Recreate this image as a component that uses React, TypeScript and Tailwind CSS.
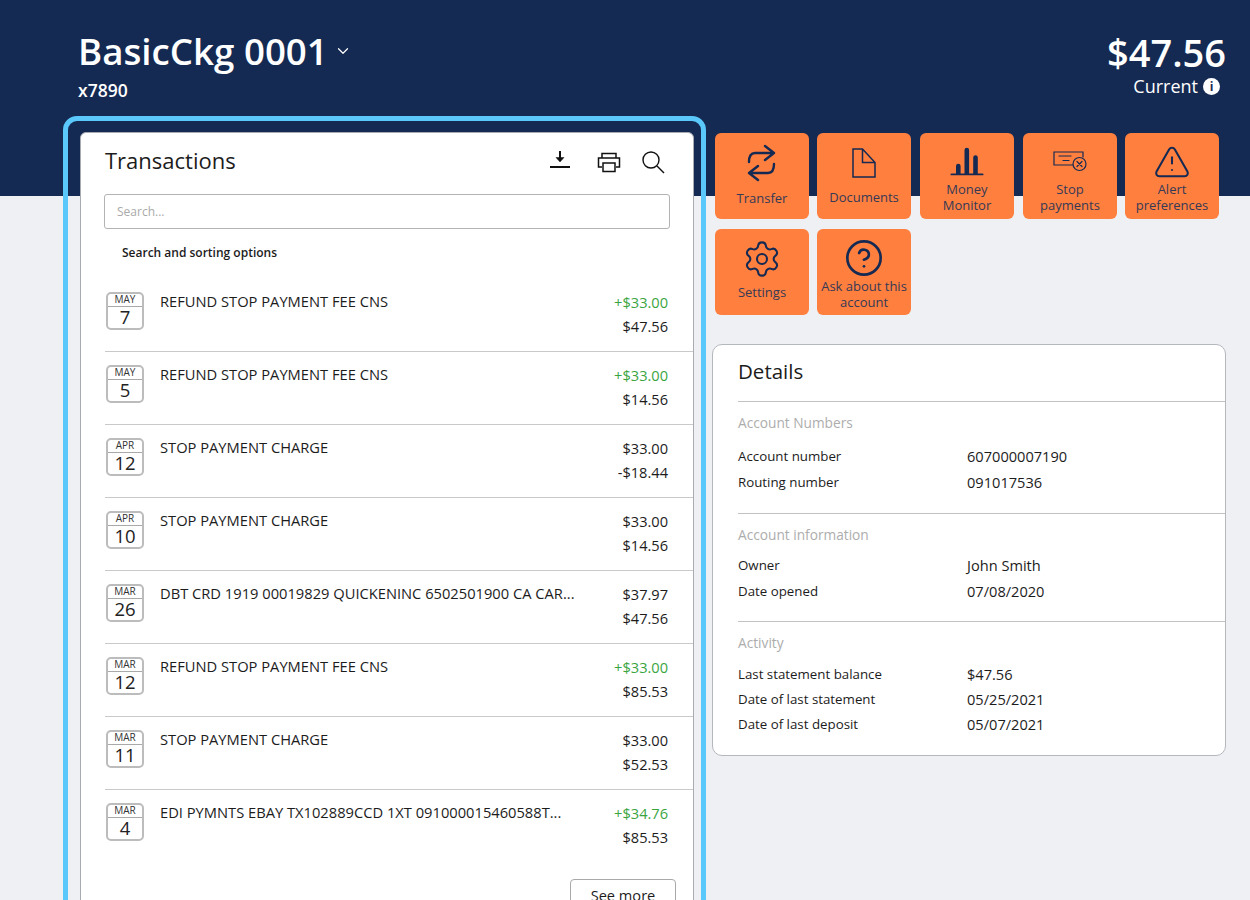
import type { ReactNode } from "react";
import { ChevronDown, CircleHelp, Settings, TriangleAlert } from "lucide-react";

const navy = "#152a52";

const transactions = [
  { month: "MAY", day: "7", name: "REFUND STOP PAYMENT FEE CNS", amount: "+$33.00", balance: "$47.56", credit: true },
  { month: "MAY", day: "5", name: "REFUND STOP PAYMENT FEE CNS", amount: "+$33.00", balance: "$14.56", credit: true },
  { month: "APR", day: "12", name: "STOP PAYMENT CHARGE", amount: "$33.00", balance: "-$18.44", credit: false },
  { month: "APR", day: "10", name: "STOP PAYMENT CHARGE", amount: "$33.00", balance: "$14.56", credit: false },
  { month: "MAR", day: "26", name: "DBT CRD 1919 00019829 QUICKENINC 6502501900 CA CAR...", amount: "$37.97", balance: "$47.56", credit: false },
  { month: "MAR", day: "12", name: "REFUND STOP PAYMENT FEE CNS", amount: "+$33.00", balance: "$85.53", credit: true },
  { month: "MAR", day: "11", name: "STOP PAYMENT CHARGE", amount: "$33.00", balance: "$52.53", credit: false },
  { month: "MAR", day: "4", name: "EDI PYMNTS EBAY TX102889CCD 1XT 091000015460588T...", amount: "+$34.76", balance: "$85.53", credit: true },
];

const sections = [
  {
    title: "Account Numbers",
    gap: "mb-[12px]",
    rowClass: "h-[26px]",
    rows: [
      ["Account number", "607000007190"],
      ["Routing number", "091017536"],
    ],
  },
  {
    title: "Account information",
    gap: "mb-[9px]",
    rowClass: "h-[26px]",
    rows: [
      ["Owner", "John Smith"],
      ["Date opened", "07/08/2020"],
    ],
  },
  {
    title: "Activity",
    gap: "mb-[10px]",
    rowClass: "h-[25px]",
    rows: [
      ["Last statement balance", "$47.56"],
      ["Date of last statement", "05/25/2021"],
      ["Date of last deposit", "05/07/2021"],
    ],
  },
];

const TransferIcon = () => (
  <svg width="30" height="38" viewBox="0 0 30 38" fill="none" stroke={navy} strokeWidth="2.4" strokeLinecap="round" strokeLinejoin="round">
    <path d="M2 18c0-6 2-9 6-9h19M18 2l9 7-9 7" />
    <path d="M27 20c0 6-2 9-6 9H2M11 22l-9 7 9 7" />
  </svg>
);

const DocumentIcon = () => (
  <svg width="24" height="30" viewBox="0 0 24 30" fill="none" stroke={navy} strokeWidth="1.5">
    <path d="M1 1h9.500L23 14.500V29H1zM10.500 1v13.500H23" />
  </svg>
);

const ChartIcon = () => (
  <svg width="34" height="30" viewBox="0 0 34 30" fill={navy}>
    <path d="M6 29V20a2.300 2.300 0 0 1 4.600 0v9zM14.500 29V4a2.300 2.300 0 0 1 4.600 0v25zM23.200 29V11.500a2.300 2.300 0 0 1 4.600 0V29z" />
    <rect x="0.500" y="27.500" width="33" height="1.800" rx="0.900" />
  </svg>
);

const StopIcon = () => (
  <svg width="34" height="22" viewBox="0 0 34 22" fill="none" stroke={navy} strokeWidth="1.200" strokeLinecap="round">
    <path d="M20 15H1V2h29v5" />
    <path d="M6 6h12M10 10.500h6" />
    <circle cx="26.500" cy="14" r="6.500" />
    <path d="M24 11.500l5 5M29 11.500l-5 5" />
  </svg>
);

const actions: { label: ReactNode; icon: ReactNode; labelClass?: string }[] = [
  { label: "Transfer", icon: <TransferIcon /> },
  { label: "Documents", icon: <DocumentIcon />, labelClass: "pb-[2px]" },
  { label: <>Money<br />Monitor</>, icon: <ChartIcon />, labelClass: "pt-[2px]" },
  { label: <>Stop<br />payments</>, icon: <StopIcon />, labelClass: "pt-[2px]" },
  { label: <>Alert<br />preferences</>, icon: <TriangleAlert size={38} strokeWidth={1.3} color={navy} /> },
  { label: "Settings", icon: <Settings size={40} strokeWidth={1.25} color={navy} />, labelClass: "pb-[5px]" },
  { label: <>Ask about this<br />account</>, icon: <CircleHelp size={40} strokeWidth={1.6} color={navy} /> },
];

const CalendarBadge = ({ month, day }: { month: string; day: string }) => (
  <div className="w-[38px] h-[38px] shrink-0 ml-px -mt-px rounded-[5px] border-2 border-[#bcbcbc] flex flex-col text-center overflow-hidden">
    <div className="h-[13px] border-b border-[#a9a9a9] text-[10px] leading-[10px] text-[#333]">{month}</div>
    <div className="flex-1 text-[18.500px] leading-[20px] text-[#222]">{day}</div>
  </div>
);

const App = () => {
  return (
    <div className="h-[900px] overflow-hidden bg-[#eef0f4] text-[#1c1c1c] font-['Open_Sans',sans-serif]">
      <header className="h-[196px] bg-[#152a52] text-white flex justify-between pl-[78px] pr-[24px] pt-[27px]">
        <div>
          <div className="flex items-center gap-[6px]">
            <h1 className="text-[36.700px] leading-[48px] font-[550]">BasicCkg 0001</h1>
            <ChevronDown size={18} strokeWidth={1.6} />
          </div>
          <div className="text-[17.500px] leading-[22px] font-[550] mt-[4px]">x7890</div>
        </div>
        <div className="flex flex-col items-end pt-[3px]">
          <div className="text-[38px] leading-[44px] font-semibold">$47.56</div>
          <div className="flex items-center gap-[5px] mr-[6px] mt-[1px] text-[18px] leading-[22px] font-medium">
            Current
            <span className="w-[17px] h-[17px] rounded-full bg-white text-[#152a52] text-[12px] leading-[17px] text-center font-bold">i</span>
          </div>
        </div>
      </header>

      <main className="-mt-[80px] flex items-start pl-[63px]">
        <section className="w-[643px] h-[900px] shrink-0 rounded-[14px] border-[5px] border-[#5ac8fa] pl-[12px] pr-[7px] pt-[11px]">
          <div className="h-[880px] bg-white rounded-[6px] border border-[#a8abb2] pl-[24px]">
            <div className="flex items-center justify-between h-[57px] pr-[28px]">
              <h2 className="text-[22px] leading-[30px] -mt-[4px]">Transactions</h2>
              <div className="flex items-center">
                <svg width="22" height="22" viewBox="0 0 22 22" fill="none" stroke="#111" className="mr-[26px] -mt-[4px]">
                  <path d="M11 2v10" strokeWidth="2" />
                  <path d="M7 8.500h8L11 13z" fill="#111" strokeWidth="0.500" />
                  <path d="M1 18h20" strokeWidth="2" />
                </svg>
                <svg width="24" height="22" viewBox="0 0 24 22" fill="none" stroke="#111" strokeWidth="1.500" className="mr-[20px]">
                  <path d="M5 7V2.500h14V7M5 16H1.500V7h21v9H19" />
                  <path d="M6 12h12v8.500H6z" />
                </svg>
                <svg width="24" height="24" viewBox="0 0 24 24" fill="none" stroke="#111" strokeWidth="1.400">
                  <circle cx="10" cy="10" r="8" />
                  <path d="M16 16l7 7" />
                </svg>
              </div>
            </div>
            <div className="w-[566px] h-[35px] -ml-px mt-[4px] rounded-[3px] border border-[#b3b3b3] pl-[12px] text-[12px] leading-[33px] text-[#aaaaaa]">Search...</div>
            <div className="pl-[17px] mt-[15px] text-[12px] leading-[18px] font-semibold">Search and sorting options</div>
            <div className="mt-[17px]">
              {transactions.map((t, i) => (
                <div key={i} className={`h-[73px] flex pt-[14px] ${i < transactions.length - 1 ? "border-b border-[#c9c9c9]" : ""}`}>
                  <CalendarBadge month={t.month} day={t.day} />
                  <div className="flex-1 min-w-0 pl-[16px] -mt-px text-[14.700px] leading-[19px]">
                    <div className="w-[418px] whitespace-nowrap">{t.name}</div>
                  </div>
                  <div className="w-[90px] mr-[25px] -mt-[3px] text-right text-[14.600px] leading-[24px]">
                    <div className={t.credit ? "text-[#3aa53f]" : ""}>{t.amount}</div>
                    <div>{t.balance}</div>
                  </div>
                </div>
              ))}
            </div>
            <div className="flex justify-end pr-[17px] mt-[16px]">
              <button className="w-[106px] h-[34px] rounded-[4px] border border-[#a9a9a9] text-[14.600px] bg-white">See more</button>
            </div>
          </div>
        </section>

        <div className="ml-[6px] w-[514px]">
          <div className="grid grid-cols-[102px_103px_103px_102px_94px] gap-y-[10px] pl-[3px] pt-[17px]">
            {actions.map((a, i) => (
              <button key={i} className="w-[94px] h-[86px] rounded-[6px] bg-[#ff7f3f] flex flex-col items-center pt-[9px] pb-[6px] text-[13px] leading-[16px] text-[#353a55]">
                <span className="h-[41px] flex items-center justify-center">{a.icon}</span>
                <span className={`flex-1 flex items-center text-center ${a.labelClass ?? ""}`}>{a.label}</span>
              </button>
            ))}
          </div>

          <section className="mt-[29px] h-[412px] bg-white rounded-[10px] border border-[#b4b7bc] pl-[25px]">
            <h2 className="text-[20.500px] leading-[27px] pt-[13px] pb-[16px] border-b border-[#c2c2c2]">Details</h2>
            {sections.map((s, i) => (
              <div key={i} className={`pt-[12px] ${i < 2 ? "border-b border-[#c2c2c2]" : ""} ${i === 0 ? "h-[112px]" : "h-[108px]"}`}>
                <div className={`text-[13.700px] leading-[18px] font-medium text-[#adadad] ${s.gap}`}>{s.title}</div>
                {s.rows.map(([k, v]) => (
                  <div key={k} className={`flex items-center text-[13.300px] ${s.rowClass}`}>
                    <span className="w-[229px]">{k}</span>
                    <span className="text-[14.600px]">{v}</span>
                  </div>
                ))}
              </div>
            ))}
          </section>
        </div>
      </main>
    </div>
  );
};

export default App;
